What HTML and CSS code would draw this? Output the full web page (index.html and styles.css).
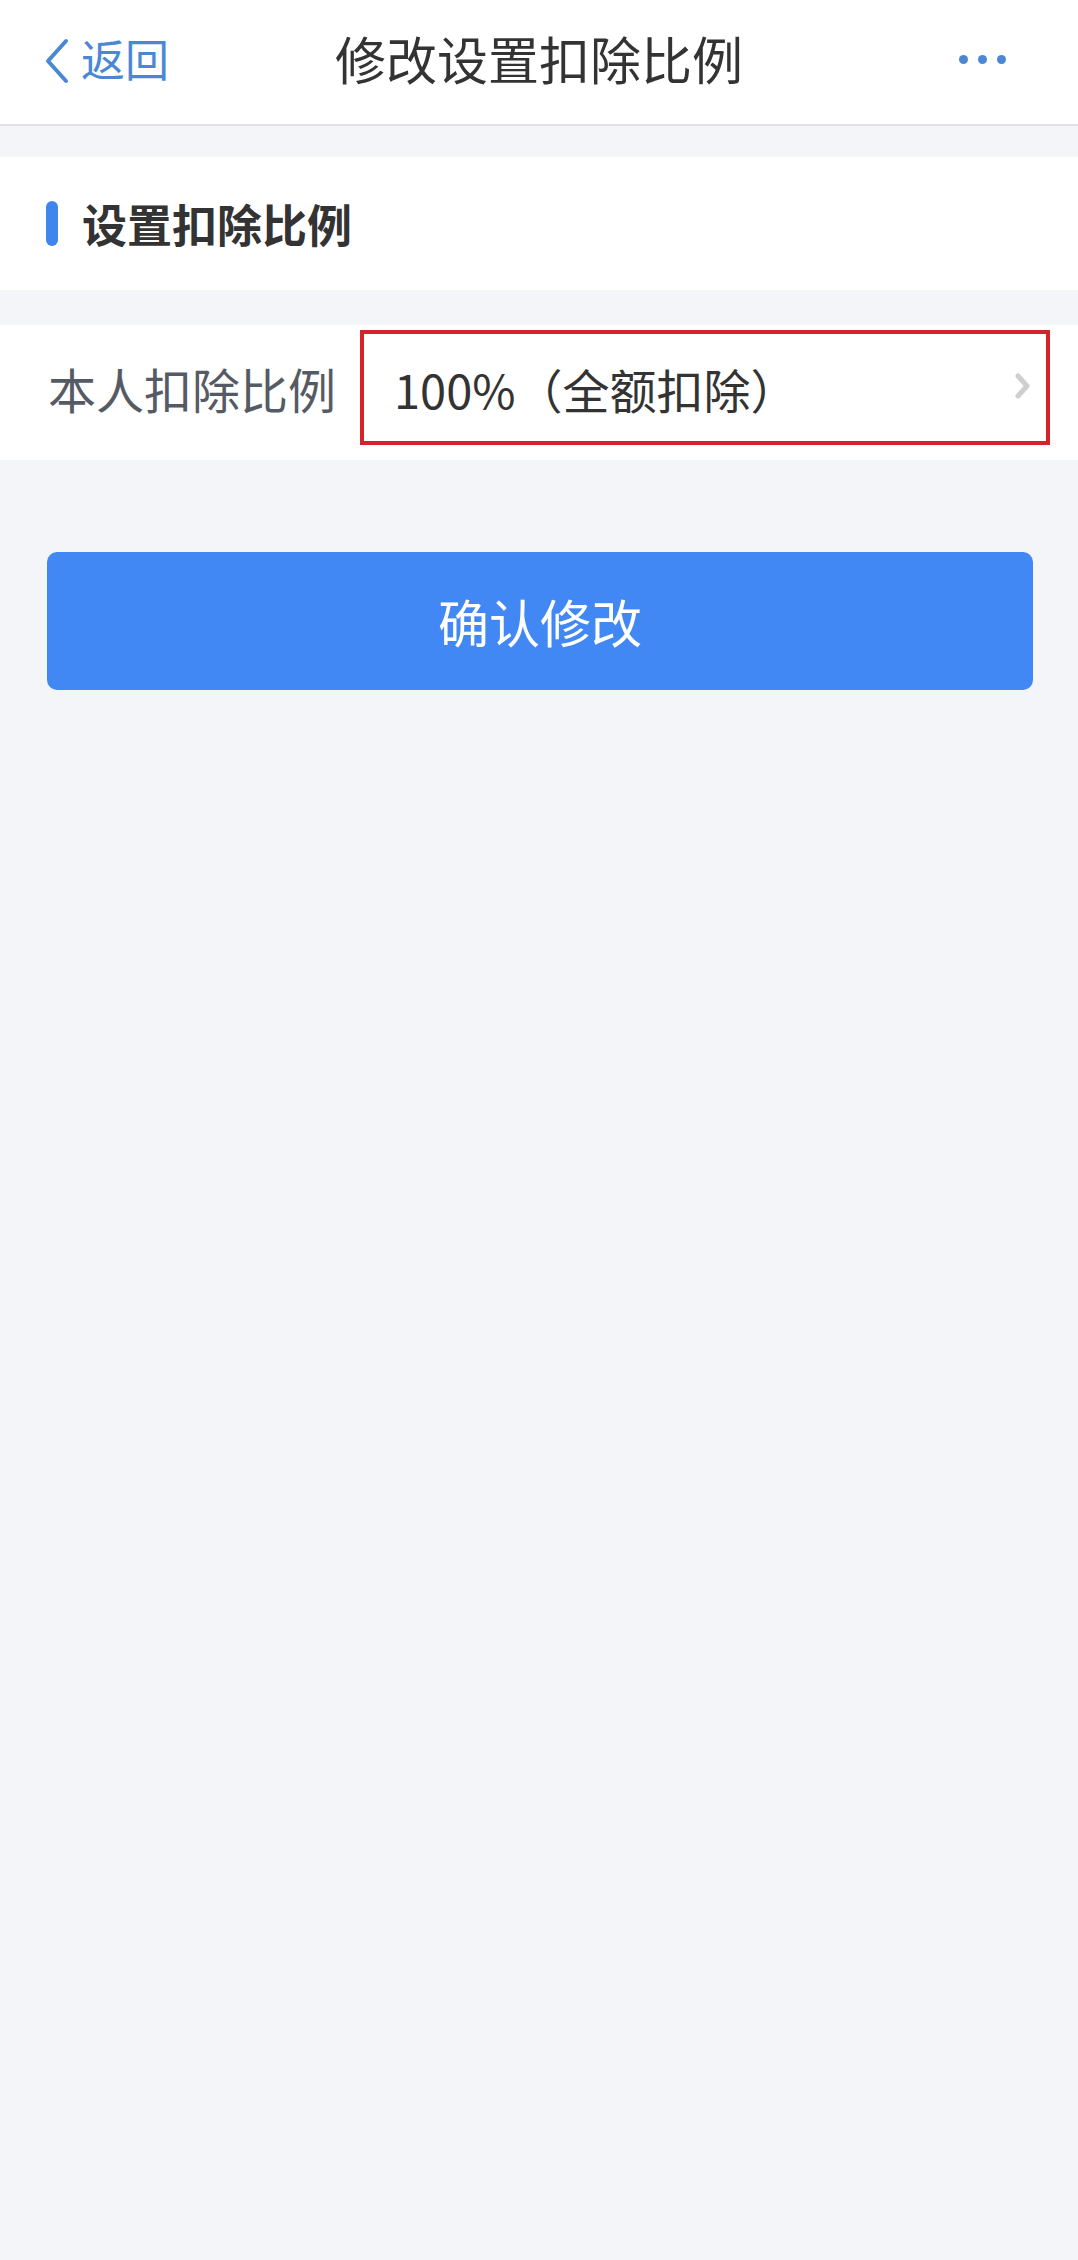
FILE: index.html
```html
<!DOCTYPE html>
<html lang="zh-CN">
<head>
<meta charset="utf-8">
<title>修改设置扣除比例</title>
<link rel="stylesheet" href="styles.css">
</head>
<body>
<header class="topbar">
  <div class="back">
    <svg class="back-icon" width="26" height="46" viewBox="0 0 26 46"><path d="M22 3 L4 23 L22 43" fill="none" stroke="#4a88d6" stroke-width="4" stroke-linecap="round" stroke-linejoin="round"/></svg>
    <span class="back-text">返回</span>
  </div>
  <h1 class="title">修改设置扣除比例</h1>
  <div class="more">
    <span class="dot"></span><span class="dot"></span><span class="dot"></span>
  </div>
</header>

<section class="section-head">
  <span class="bar"></span>
  <span class="section-title">设置扣除比例</span>
</section>

<div class="row">
  <span class="label">本人扣除比例</span>
  <div class="value-box">
    <span class="value">100%（全额扣除）</span>
    <svg class="arrow" width="18" height="26" viewBox="0 0 18 26"><path d="M4 3 L13 13 L4 23" fill="none" stroke="#cfcfcf" stroke-width="5" stroke-linecap="round" stroke-linejoin="round"/></svg>
  </div>
</div>

<div class="actions">
  <button class="confirm">确认修改</button>
</div>
</body>
</html>
```

FILE: styles.css
```css
html, body {
  margin: 0;
  padding: 0;
}
body {
  background: #f4f5f9;
  font-family: "Noto Sans CJK SC", "Noto Sans", sans-serif;
  min-height: 2260px;
  color: #333;
}
.topbar {
  height: 126px;
  box-sizing: border-box;
  padding-bottom: 8px;
  background: #fff;
  border-bottom: 2px solid #e3e3e5;
  display: grid;
  grid-template-columns: 1fr auto 1fr;
  align-items: center;
}
.back {
  display: flex;
  align-items: center;
  padding-left: 44px;
  gap: 11px;
}
.back-icon {
  margin-top: 6px;
}
.back-text {
  font-size: 44px;
  color: #4a88d6;
  line-height: 1;
}
.title {
  margin: 0;
  font-size: 51px;
  font-weight: 400;
  color: #333;
  line-height: 1;
  letter-spacing: 0;
}
.more {
  justify-self: end;
  display: flex;
  gap: 10px;
  padding-right: 72px;
  margin-top: 2px;
}
.dot {
  width: 9px;
  height: 9px;
  border-radius: 50%;
  background: #4a88d6;
}
.section-head {
  margin-top: 31px;
  height: 133px;
  background: #fff;
  display: flex;
  align-items: center;
  padding-left: 46px;
  gap: 24px;
}
.bar {
  width: 12px;
  height: 45px;
  border-radius: 6px;
  background: #3e86ee;
}
.section-title {
  font-size: 45px;
  font-weight: 700;
  color: #333;
  line-height: 1;
}
.row {
  margin-top: 35px;
  height: 135px;
  background: #fff;
  display: flex;
  align-items: flex-start;
  box-sizing: border-box;
  padding-top: 5px;
}
.label {
  width: 312px;
  padding-left: 48px;
  height: 115px;
  display: flex;
  align-items: center;
  font-size: 48px;
  color: #555b64;
  flex-shrink: 0;
}
.value-box {
  width: 690px;
  height: 115px;
  box-sizing: border-box;
  border: 4px solid #d3242c;
  display: flex;
  align-items: center;
  justify-content: space-between;
  padding-left: 30px;
  padding-right: 14px;
}
.value {
  font-size: 47px;
  color: #333;
  line-height: 1;
  margin-top: 2px;
}
.arrow {
  margin-top: -4px;
}
.actions {
  padding: 92px 45px 0 47px;
}
.confirm {
  display: block;
  width: 100%;
  height: 138px;
  border: none;
  border-radius: 10px;
  background: #4288f4;
  color: #fff;
  font-family: "Noto Sans CJK SC", "Noto Sans", sans-serif;
  font-size: 51px;
  font-weight: 400;
}
```
